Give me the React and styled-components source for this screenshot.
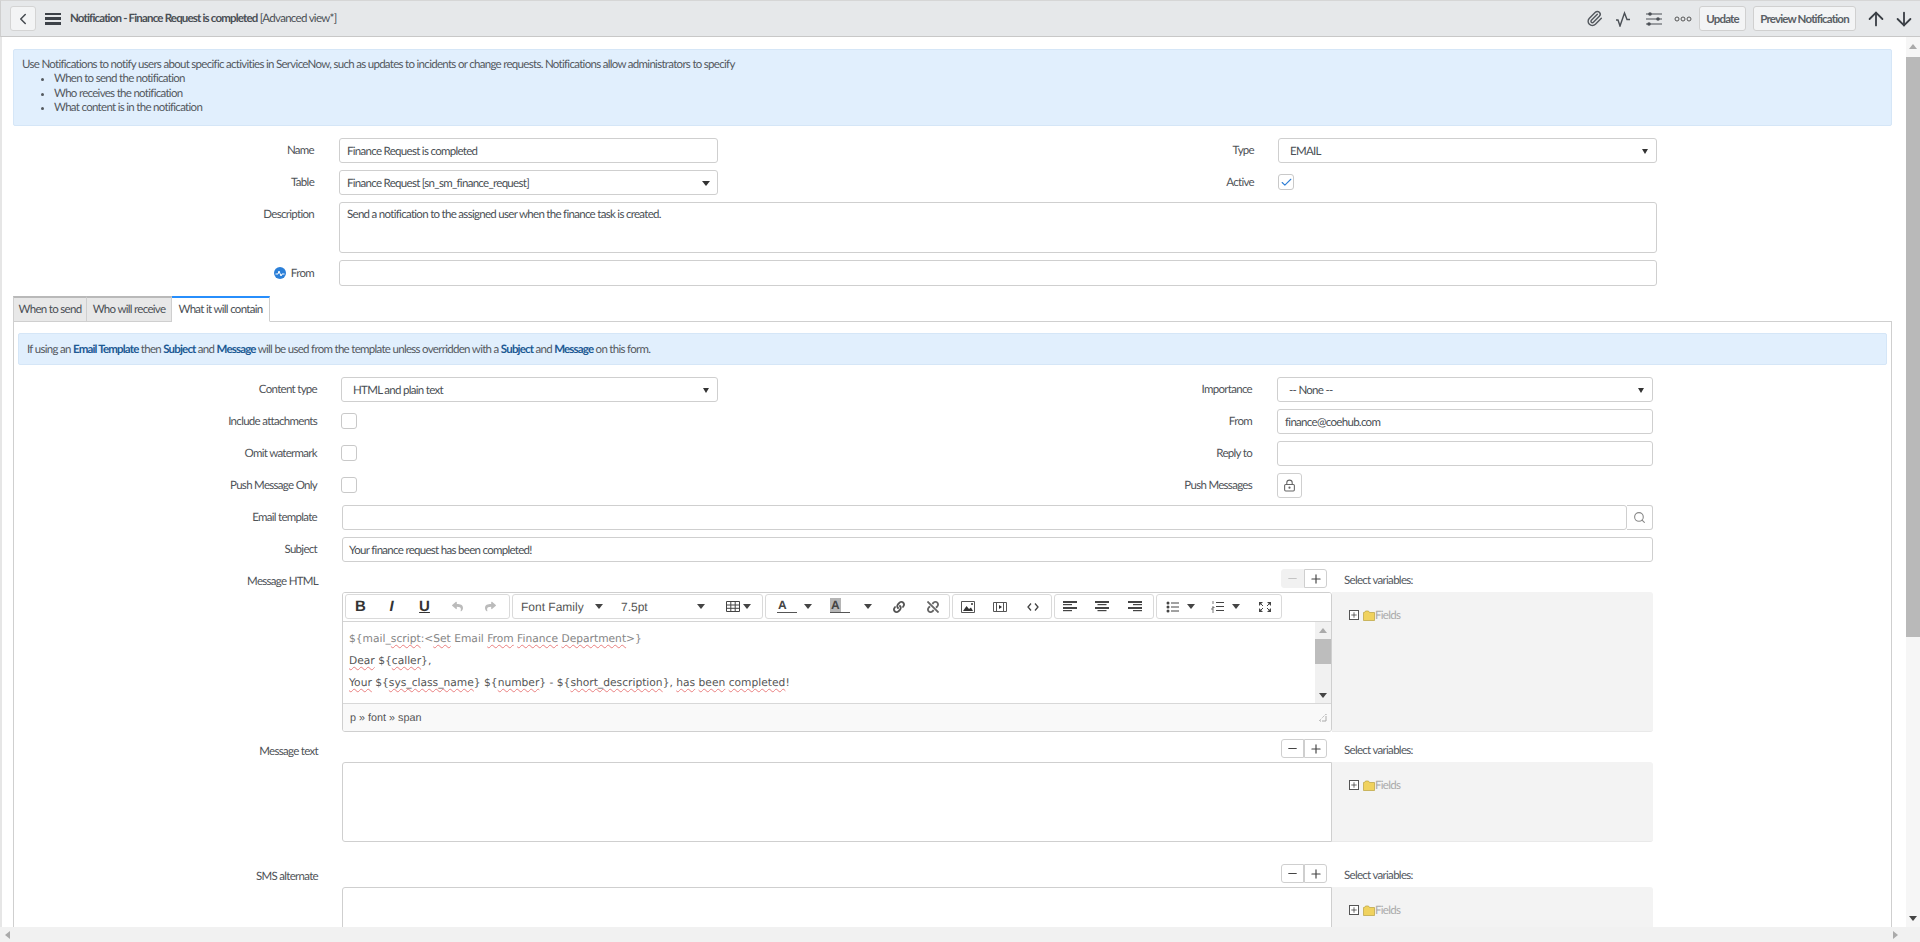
import React from "react";
import styled, { createGlobalStyle } from "styled-components";
import { ArrowUp, ArrowDown, ChevronLeft, Paperclip, LockKeyhole, Search, Plus, Minus, Check } from "lucide-react";
import { FaReply, FaShare, FaLink, FaUnlink } from "react-icons/fa";

const FACE = `"Lato", "Liberation Sans", sans-serif`;
const SIZE = "11.5px";
const TRACK = "-0.7px";
const BOLD_TRACK = "-0.82px";

const Global = createGlobalStyle`
  html, body { margin: 0; padding: 0; height: 100%; overflow: hidden; background: #fff; }
  * { box-sizing: border-box; }
  body { font-family: ${FACE}; font-size: ${SIZE}; letter-spacing: ${TRACK}; color: #4f5358; text-rendering: geometricPrecision; }
`;

const App_ = styled.div`
  height: 942px; width: 1920px; display: flex; flex-direction: column; overflow: hidden;
  box-shadow: inset 2px 0 0 #e6e6e6;
`;
const Header = styled.header`
  height: 37px; flex: none; display: flex; align-items: center; background: #e6e8ea;
  border-top: 1px solid #d6d6d6; border-left: 1px solid #cfcfcf; border-bottom: 1px solid #c8c8c8;
  padding: 0 2px 0 9px;
`;
const BackButton = styled.button`
  width: 26px; height: 25px; padding: 0; display: flex; align-items: center; justify-content: center;
  background: #f3f4f5; border: 1px solid #d4d4d4; border-radius: 3px; color: #454a50;
`;
const Burger = styled.span`
  width: 16px; height: 12px; margin-left: 9px; display: flex; flex-direction: column; justify-content: space-between;
  & > i { display: block; height: 2.6px; background: #3d4248; }
`;
const Title = styled.div`
  margin-left: 9px; color: #4a4f55; white-space: nowrap;
  & > b { font-weight: 700; letter-spacing: ${BOLD_TRACK}; }
`;
const Spacer = styled.div`flex: 1;`;
const HeadIcon = styled.span`
  width: ${p => p.$w || 29.5}px; margin-left: ${p => p.$ml || 0}px; display: flex; justify-content: center; align-items: center; color: #53585e;
`;
const HeadButton = styled.button`
  height: 25px; padding: 0; width: ${p => p.$w}px; margin-left: ${p => p.$ml || 0}px; background: #f3f4f5; white-space: nowrap;
  border: 1px solid #d0d0d0; border-radius: 3px; font: 700 ${SIZE} ${FACE}; letter-spacing: ${BOLD_TRACK}; color: #5a5f65;
`;

const Middle = styled.div`flex: 1; min-height: 0; display: flex;`;
const Content = styled.main`flex: 1; min-width: 0; overflow: hidden; padding: 12px 14px 0 0;`;
const VBar = styled.div`width: 14px; flex: none; display: flex; flex-direction: column; background: #f6f6f6;`;
const VThumb = styled.div`height: 580px; background: #b9b9b9; margin-top: 2px;`;
const ArrowCell = styled.div`height: ${p => p.$h || 18}px; display: flex; align-items: center; justify-content: center; flex: none;`;
const Tri = styled.span`
  width: 0; height: 0; border-style: solid; display: block;
  ${p => p.$dir === "up" && `border-width: 0 4px 5px 4px; border-color: transparent transparent ${p.$c || "#aaa"} transparent;`}
  ${p => p.$dir === "down" && `border-width: 5px 4px 0 4px; border-color: ${p.$c || "#555"} transparent transparent transparent;`}
  ${p => p.$dir === "small" && `border-width: 5px 3px 0 3px; border-color: ${p.$c || "#333"} transparent transparent transparent; margin-right: 1px;`}
  ${p => p.$dir === "left" && `border-width: 4px 5px 4px 0; border-color: transparent ${p.$c || "#aaa"} transparent transparent;`}
  ${p => p.$dir === "right" && `border-width: 4px 0 4px 5px; border-color: transparent transparent transparent ${p.$c || "#aaa"};`}
`;
const HBar = styled.div`
  height: 15px; flex: none; display: flex; align-items: center; justify-content: space-between;
  background: #f1f1f1; padding: 0 22px 0 5px;
`;

const InfoBox = styled.div`
  margin-left: 13px; height: 77px; padding: 8px 8px 0; background: #e1effd; border: 1px solid #d5e6f7; border-radius: 2px;
  line-height: 14.4px; color: #54595f;
`;
const InfoList = styled.ul`margin: 0; padding: 0 0 0 32px;`;

const TopGrid = styled.section`
  margin-top: 12px; display: grid; grid-template-columns: 339px 379px 560px 379px; row-gap: 7px;
  grid-template-rows: 25px 25px 51px 26px;
`;
const SubGrid = styled.section`
  margin: 12px -4px 0; display: grid; grid-template-columns: 327px 377px 559px 376px; row-gap: 7px; grid-auto-rows: 25px;
`;
const Label = styled.label`
  display: flex; align-items: center; justify-content: flex-end; gap: 5px; padding-right: ${p => p.$pr || 25}px;
  color: #4f5358; white-space: nowrap;
`;
const Field = styled.div`
  display: flex; align-items: center; justify-content: space-between;
  height: 100%; padding: 1px ${p => p.$pr || 7}px 0 ${p => p.$pl || 7}px; background: #fff;
  border: 1px solid #cfcfcf; border-radius: 3px; color: #4a4f55;
  flex: ${p => p.$flex ? 1 : "initial"};
  grid-column: ${p => p.$span || "auto"};
  margin-left: ${p => p.$ml || 0}px;
`;
const TextArea = styled(Field)`align-items: flex-start; padding-top: 5px;`;
const DescLabel = styled(Label)`align-items: flex-start; padding-top: 6px;`;
const Combo = styled.div`display: flex; grid-column: 2 / 5; margin-left: 1px; height: 100%;`;
const SearchBtn = styled.span`
  width: 26px; display: flex; align-items: center; justify-content: center; border: 1px solid #cfcfcf; border-left: none;
  border-radius: 0 3px 3px 0; color: #888;
`;
const Check_ = styled.span`
  width: 16px; height: 16px; margin-top: -1px; display: flex; align-items: center; justify-content: center; border: 1px solid #c9c9c9; border-radius: 3px; background: #fff;
  color: #2f7fd6;
`;
const CheckCell = styled.div`display: flex; align-items: center;`;
const LockBtn = styled.span`
  width: 25px; height: 25px; display: flex; align-items: center; justify-content: center; border: 1px solid #cfcfcf; border-radius: 3px; color: #666;
`;

const Tabs = styled.nav`display: flex; margin: 10px 0 -1px 13px; position: relative; z-index: 1;`;
const Tab = styled.div`
  height: 26px; width: ${p => p.$w}px; display: flex; align-items: center; justify-content: center; white-space: nowrap;
  color: #4a4f55;
  background: ${p => p.$active ? "#fff" : "#e8e8e8"};
  border-top: 2px solid ${p => p.$active ? "#278efc" : "#b9b9b9"};
  border-right: 1px solid #cfcfcf;
  border-left: ${p => p.$first ? "1px solid #cfcfcf" : "none"};
  border-bottom: 1px solid ${p => p.$active ? "#fff" : "#cfcfcf"};
`;
const Panel = styled.section`margin-left: 13px; border: 1px solid #cfcfcf; border-bottom: none; padding: 11px 4px 0;`;
const Alert = styled.div`
  height: 32px; display: flex; align-items: center; padding: 0 8px; background: #e1effd; border: 1px solid #d5e6f7; border-radius: 2px;
  color: #54595f;
`;
const AlertText = styled.div`& > b { color: #1d5a94; font-weight: 700; letter-spacing: ${BOLD_TRACK}; }`;

const MsgGrid = styled.div`
  margin: ${p => p.$mt ?? 7}px 0 0 -4px; display: grid; grid-template-columns: 328px 990px 321px; grid-template-rows: 19px auto; row-gap: 4px;
`;
const MsgLabel = styled(Label)`padding: 5px 24px 0 0;`;
const Stepper = styled.div`display: flex; justify-content: flex-end; padding-right: 5px;`;
const StepBtn = styled.span`
  width: 23px; height: 19px; display: flex; align-items: center; justify-content: center;
  background: ${p => p.$off ? "#f1f1f1" : "#fff"}; color: ${p => p.$off ? "#c4c4c4" : "#444"};
  border: 1px solid ${p => p.$off ? "#f1f1f1" : "#cfcfcf"};
  border-radius: ${p => p.$left ? "3px 0 0 3px" : "0 3px 3px 0"};
`;
const VarLabel = styled.div`padding: 5px 0 0 12px; color: #54595f; white-space: nowrap;`;
const VarPanel = styled.div`
  height: ${p => p.$h}px; padding: ${p => p.$pt}px 0 0 17px; background: #f3f3f3; border-radius: 0 3px 3px 0;
  border-bottom: 1px solid #e9e9e9;
`;
const TreeRow = styled.div`display: flex; align-items: center; height: 14px; color: #aaa;`;
const TreeBox = styled.span`
  width: 10px; height: 10px; border: 1px solid #555; background: #fff; display: flex; align-items: center; justify-content: center; color: #222; margin-right: 4px;
`;

const Editor = styled.div`height: 140px; border: 1px solid #cfcfcf; border-radius: 3px; display: flex; flex-direction: column; overflow: hidden;`;
const Toolbar = styled.div`height: 29px; flex: none; padding: 1px 2px 0; display: flex; gap: 2px; border-bottom: 1px solid #d4d4d4; background: #fff;`;
const Group = styled.div`width: ${p => p.$w}px; height: 25px; display: flex; border: 1px solid #dadada; border-radius: 3px; background: #fff;`;
const Tool = styled.span`
  width: ${p => p.$w || 33}px; flex: none; display: flex; align-items: center; gap: ${p => p.$gap || 0}px;
  justify-content: ${p => p.$between ? "space-between" : "center"};
  padding: ${p => p.$between ? "0 10px 0 8px" : 0}; color: #444; font: 12px "Liberation Sans", sans-serif; letter-spacing: 0;
`;
const ToolLetter = styled.span`
  font: ${p => p.$i ? "italic 700" : "700"} 15px "Liberation Sans", sans-serif; color: #333;
  text-decoration: ${p => p.$u ? "underline" : "none"};
`;
const ColorA = styled.span`
  display: inline-block; width: 20px; font: 700 12px "Liberation Sans", sans-serif; color: #444; border-bottom: 1px solid #555; line-height: 11px; height: 13px;
  margin-left: ${p => p.$hl ? 0 : 3}px;
  & > i { font-style: normal; background: ${p => p.$hl ? "#b5b5b5" : "transparent"}; padding: 0 1px; }
`;
const ListText = styled.span`font: 12px "Liberation Sans", sans-serif; color: #555;`;
const EditorBody = styled.div`height: 81px; flex: none; display: flex;`;
const EditorText = styled.div`
  flex: 1; min-width: 0; padding: 6px 6px; font: 10.7px/22px "DejaVu Sans", sans-serif; letter-spacing: 0; color: #555; white-space: nowrap;
`;
const MailLine = styled.div`color: ${p => p.$muted ? "#858585" : "#555"};`;
const Sp = styled.span`text-decoration: underline wavy #ea8080 1px; text-underline-offset: 2px;`;
const EditorScroll = styled.div`width: 16px; flex: none; display: flex; flex-direction: column; background: #f1f1f1;`;
const EditorThumb = styled.div`height: 25px; background: #bdbdbd; margin-top: 1px;`;
const StatusBar = styled.div`
  flex: 1; display: flex; align-items: center; justify-content: space-between; padding: 0 4px 0 7px; border-top: 1px solid #d8d8d8; background: #f9f9f9;
  font: 10.8px "Liberation Sans", sans-serif; letter-spacing: 0; color: #555;
`;
const PlainArea = styled.div`height: ${p => p.$h}px; border: 1px solid #cfcfcf; border-radius: 3px 0 0 3px; background: #fff;`;

const Ic = ({ w = 16, h = 16, children }) => (
  <svg width={w} height={h} viewBox={`0 0 ${w} ${h}`} fill="none">{children}</svg>
);

const Bars = ({ rows }) => (
  <Ic w={14} h={13}>{rows.map(([x, wd], i) => <rect key={i} x={x} y={1 + i * 3} width={wd} height={i % 2 ? 1.2 : 2} fill="#444" />)}</Ic>
);

const Folder = () => (
  <svg width="12" height="11" viewBox="0 0 12 11"><path d="M.5 2.5h1l1-1.5h3l1 1.5h5v8H.5z" fill="#f0d25e" stroke="#b9a23e" strokeWidth=".7" /></svg>
);

const Tree = () => (
  <TreeRow><TreeBox><Plus size={8} strokeWidth={2} /></TreeBox><Folder />Fields</TreeRow>
);

const Resize = () => (
  <svg width="9" height="9" viewBox="0 0 9 9"><path d="M8 1v7H1zM8 4v4H4" fill="none" stroke="#aaa" strokeDasharray="1 1" /></svg>
);

function Steppers({ off }) {
  return (
    <Stepper>
      <StepBtn $left $off={off}><Minus size={13} /></StepBtn>
      <StepBtn><Plus size={14} /></StepBtn>
    </Stepper>
  );
}

function RichEditor() {
  return (
    <Editor>
      <Toolbar>
        <Group $w={165}>
          <Tool $w={29}><ToolLetter>B</ToolLetter></Tool>
          <Tool><ToolLetter $i>I</ToolLetter></Tool>
          <Tool><ToolLetter $u>U</ToolLetter></Tool>
          <Tool><FaReply size={11} color="#bbb" /></Tool>
          <Tool><FaShare size={11} color="#bbb" /></Tool>
        </Group>
        <Group $w={251}>
          <Tool $w={100} $between><ListText>Font Family</ListText><Tri $dir="down" $c="#444" /></Tool>
          <Tool $w={102} $between><ListText>7.5pt</ListText><Tri $dir="down" $c="#444" /></Tool>
          <Tool $w={47} $gap={2}>
            <Ic w={15} h={13}><path d="M.5 1.5h13v10H.5zM.5 5h13M.5 8.3h13M4.8 1.5v10M9.2 1.5v10" stroke="#444" /></Ic>
            <Tri $dir="down" $c="#444" />
          </Tool>
        </Group>
        <Group $w={185}>
          <Tool $w={56} $between><ColorA><i>A</i></ColorA><Tri $dir="down" $c="#444" /></Tool>
          <Tool $w={60} $between><ColorA $hl><i>A</i></ColorA><Tri $dir="down" $c="#444" /></Tool>
          <Tool $w={34}><FaLink size={12} color="#555" /></Tool>
          <Tool $w={33}><FaUnlink size={12} color="#666" /></Tool>
        </Group>
        <Group $w={100}>
          <Tool $w={30}><Ic w={14} h={12}><path d="M.5 .5h13v11H.5z" stroke="#555" /><path d="M2 10l3.5-5 2.5 3 2-1.5 2 3.5z" fill="#333" /><circle cx="11" cy="3" r="1" fill="#333" /></Ic></Tool>
          <Tool><Ic w={14} h={12}><path d="M.5 1.5h13v9H.5zM3.5 1.5v9M10.5 1.5v9" stroke="#555" /><path d="M6 4l3 2-3 2z" fill="#333" /></Ic></Tool>
          <Tool><Ic w={12} h={10}><path d="M4 1.5L1 5l3 3.5M8 1.5L11 5 8 8.5" stroke="#444" strokeWidth="1.3" /></Ic></Tool>
        </Group>
        <Group $w={100}>
          <Tool $w={30}><Bars rows={[[0, 14], [0, 9], [0, 14], [0, 9]]} /></Tool>
          <Tool><Bars rows={[[0, 14], [2.5, 9], [0, 14], [2.5, 9]]} /></Tool>
          <Tool><Bars rows={[[0, 14], [5, 9], [0, 14], [5, 9]]} /></Tool>
        </Group>
        <Group $w={126}>
          <Tool $w={46} $gap={7}>
            <Ic w={14} h={12}><circle cx="2" cy="2" r="1.5" fill="#444" /><circle cx="2" cy="6" r="1.5" fill="#444" /><circle cx="2" cy="10" r="1.5" fill="#444" /><path d="M5 2h8M5 6h8M5 10h8" stroke="#444" /></Ic>
            <Tri $dir="down" $c="#444" />
          </Tool>
          <Tool $w={45} $gap={7}>
            <Ic w={14} h={13}><path d="M2 1v3M1 7h2v1H1v2h2M1 12h2" stroke="#555" strokeWidth=".8" /><path d="M5 2.5h8M5 6.5h8M5 10.5h8" stroke="#444" /></Ic>
            <Tri $dir="down" $c="#444" />
          </Tool>
          <Tool $w={33}>
            <Ic w={14} h={12}><path d="M1 1h4L1 5zM13 1H9l4 4zM1 11h4L1 7zM13 11H9l4-4z" fill="#444" /><path d="M2.5 2.5l2.5 2.5M11.5 2.5L9 5M2.5 9.5L5 7M11.5 9.5L9 7" stroke="#444" /></Ic>
          </Tool>
        </Group>
      </Toolbar>
      <EditorBody>
        <EditorText>
          <MailLine $muted>{"${mail_"}<Sp>script</Sp>{":<"}<Sp>Set</Sp>{" Email "}<Sp>From</Sp> <Sp>Finance</Sp> <Sp>Department</Sp>{">}"}</MailLine>
          <MailLine><Sp>Dear</Sp>{" ${"}<Sp>caller</Sp>{"},"}</MailLine>
          <MailLine><Sp>Your</Sp>{" ${"}<Sp>sys_class_name</Sp>{"} ${"}<Sp>number</Sp>{"} - ${"}<Sp>short_description</Sp>{"}, "}<Sp>has</Sp> <Sp>been</Sp> <Sp>completed</Sp>!</MailLine>
        </EditorText>
        <EditorScroll>
          <ArrowCell $h={16}><Tri $dir="up" /></ArrowCell>
          <EditorThumb />
          <Spacer />
          <ArrowCell $h={16}><Tri $dir="down" $c="#444" /></ArrowCell>
        </EditorScroll>
      </EditorBody>
      <StatusBar>p » font » span<Resize /></StatusBar>
    </Editor>
  );
}

function SubForm() {
  return (
    <SubGrid>
      <Label $pr={24}>Content type</Label>
      <Field $pl={11}>HTML and plain text<Tri $dir="small" /></Field>
      <Label>Importance</Label>
      <Field $pl={11}>-- None --<Tri $dir="small" /></Field>

      <Label $pr={24}>Include attachments</Label>
      <CheckCell><Check_ /></CheckCell>
      <Label>From</Label>
      <Field>finance@coehub.com</Field>

      <Label $pr={24}>Omit watermark</Label>
      <CheckCell><Check_ /></CheckCell>
      <Label>Reply to</Label>
      <Field />

      <Label $pr={24}>Push Message Only</Label>
      <CheckCell><Check_ /></CheckCell>
      <Label>Push Messages</Label>
      <CheckCell><LockBtn><LockKeyhole size={13} /></LockBtn></CheckCell>

      <Label $pr={24}>Email template</Label>
      <Combo><Field $flex /><SearchBtn><Search size={13} /></SearchBtn></Combo>

      <Label $pr={24}>Subject</Label>
      <Field $span="2 / 5" $ml={1} $pl={6}>Your finance request has been completed!</Field>
    </SubGrid>
  );
}

export default function App() {
  return (
    <App_>
      <Global />
      <Header>
        <BackButton><ChevronLeft size={18} /></BackButton>
        <Burger><i /><i /><i /></Burger>
        <Title><b>Notification - Finance Request is completed</b> [Advanced view*]</Title>
        <Spacer />
        <HeadIcon><Paperclip size={17} /></HeadIcon>
        <HeadIcon>
          <Ic w={18} h={16}><path d="M1 9h2l2 6L9.5 2 12 8.5h3" stroke="#4a4f55" strokeWidth="1.4" /></Ic>
        </HeadIcon>
        <HeadIcon>
          <Ic w={18} h={16}><path d="M1 3h16M1 8h16M1 13h16" stroke="#4a4f55" strokeWidth="1.2" /><circle cx="5" cy="3" r="1.8" fill="#4a4f55" /><circle cx="13" cy="8" r="1.8" fill="#4a4f55" /><circle cx="4" cy="13" r="1.8" fill="#4a4f55" /></Ic>
        </HeadIcon>
        <HeadIcon>
          <Ic w={18} h={8}><circle cx="3" cy="4" r="2" stroke="#555" /><circle cx="9" cy="4" r="2" stroke="#555" /><circle cx="15" cy="4" r="2" stroke="#555" /></Ic>
        </HeadIcon>
        <HeadButton $w={47} $ml={1}>Update</HeadButton>
        <HeadButton $w={103} $ml={7}>Preview Notification</HeadButton>
        <HeadIcon $w={28} $ml={6}><ArrowUp size={22} color="#3a3f45" /></HeadIcon>
        <HeadIcon $w={28}><ArrowDown size={22} color="#3a3f45" /></HeadIcon>
      </Header>
      <Middle>
        <Content>
          <InfoBox>
            Use Notifications to notify users about specific activities in ServiceNow, such as updates to incidents or change requests. Notifications allow administrators to specify
            <InfoList>
              <li>When to send the notification</li>
              <li>Who receives the notification</li>
              <li>What content is in the notification</li>
            </InfoList>
          </InfoBox>
          <TopGrid>
            <Label>Name</Label>
            <Field>Finance Request is completed</Field>
            <Label $pr={24}>Type</Label>
            <Field $pl={11}>EMAIL<Tri $dir="small" /></Field>

            <Label>Table</Label>
            <Field>Finance Request [sn_sm_finance_request]<Tri $dir="down" $c="#333" /></Field>
            <Label $pr={24}>Active</Label>
            <CheckCell><Check_><Check size={13} strokeWidth={2} /></Check_></CheckCell>

            <DescLabel>Description</DescLabel>
            <TextArea $span="2 / 5">Send a notification to the assigned user when the finance task is created.</TextArea>

            <Label>
              <svg width="12" height="12" viewBox="0 0 12 12"><circle cx="6" cy="6" r="6" fill="#2b7fd8" /><path d="M1.5 7h2.5l1-3 2 5 1-2h2.5" fill="none" stroke="#fff" strokeWidth="1" /></svg>
              From
            </Label>
            <Field $span="2 / 5" />
          </TopGrid>

          <Tabs>
            <Tab $w={74} $first>When to send</Tab>
            <Tab $w={85}>Who will receive</Tab>
            <Tab $w={98} $active>What it will contain</Tab>
          </Tabs>
          <Panel>
            <Alert>
              <AlertText>If using an <b>Email Template</b> then <b>Subject</b> and <b>Message</b> will be used from the template unless overridden with a <b>Subject</b> and <b>Message</b> on this form.</AlertText>
            </Alert>
            <SubForm />
            <MsgGrid>
              <MsgLabel>Message HTML</MsgLabel>
              <Steppers off />
              <VarLabel>Select variables:</VarLabel>
              <div />
              <RichEditor />
              <VarPanel $h={140} $pt={16}><Tree /></VarPanel>
            </MsgGrid>
            <MsgGrid>
              <MsgLabel>Message text</MsgLabel>
              <Steppers />
              <VarLabel>Select variables:</VarLabel>
              <div />
              <PlainArea $h={80} />
              <VarPanel $h={80} $pt={16}><Tree /></VarPanel>
            </MsgGrid>
            <MsgGrid $mt={22}>
              <MsgLabel>SMS alternate</MsgLabel>
              <Steppers />
              <VarLabel>Select variables:</VarLabel>
              <div />
              <PlainArea $h={80} />
              <VarPanel $h={80} $pt={16}><Tree /></VarPanel>
            </MsgGrid>
          </Panel>
        </Content>
        <VBar>
          <ArrowCell><Tri $dir="up" /></ArrowCell>
          <VThumb />
          <Spacer />
          <ArrowCell><Tri $dir="down" $c="#444" /></ArrowCell>
        </VBar>
      </Middle>
      <HBar><Tri $dir="left" /><Tri $dir="right" /></HBar>
    </App_>
  );
}
